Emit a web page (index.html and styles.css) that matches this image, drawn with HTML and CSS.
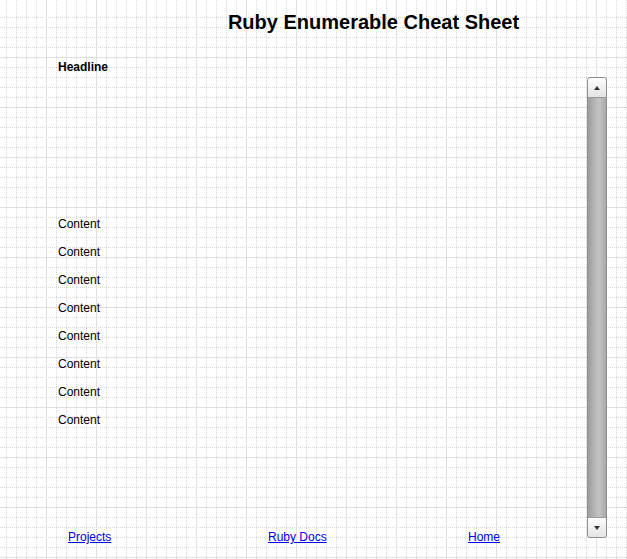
FILE: index.html
```html
<!DOCTYPE html>
<html lang="en">
<head>
<meta charset="utf-8">
<title>Ruby Enumerable Cheat Sheet</title>
<link rel="stylesheet" href="styles.css">
</head>
<body>
<div class="page">
  <h1 class="title">Ruby Enumerable Cheat Sheet</h1>
  <div class="main">
    <div class="column">
      <h2 class="headline">Headline</h2>
      <ul class="content-list">
        <li>Content</li>
        <li>Content</li>
        <li>Content</li>
        <li>Content</li>
        <li>Content</li>
        <li>Content</li>
        <li>Content</li>
        <li>Content</li>
      </ul>
      <nav class="footer-links">
        <a href="#">Projects</a>
        <a href="#">Ruby Docs</a>
        <a href="#">Home</a>
      </nav>
    </div>
    <div class="scrollbar">
      <div class="sb-btn"><span class="arrow-up"></span></div>
      <div class="sb-thumb"></div>
      <div class="sb-btn sb-btn-down"><span class="arrow-down"></span></div>
    </div>
  </div>
</div>
</body>
</html>
```

FILE: styles.css
```css
html, body {
  margin: 0;
  padding: 0;
  background: #ffffff;
}

body {
  font-family: "Liberation Sans", Arial, Helvetica, sans-serif;
  color: #000;
}

.page {
  box-sizing: border-box;
  min-height: 100vh;
  padding-top: 10px;
  background-color: #ffffff;
  background-image:
    url("data:image/svg+xml,%3Csvg xmlns='http://www.w3.org/2000/svg' width='50' height='2'%3E%3Crect x='0' y='0' width='1' height='2' fill='%23e0e0e0'/%3E%3Crect x='10' y='0' width='1' height='1' fill='%23dadada'/%3E%3Crect x='20' y='0' width='1' height='1' fill='%23dadada'/%3E%3Crect x='30' y='0' width='1' height='1' fill='%23dadada'/%3E%3Crect x='40' y='0' width='1' height='1' fill='%23dadada'/%3E%3C/svg%3E"),
    url("data:image/svg+xml,%3Csvg xmlns='http://www.w3.org/2000/svg' width='2' height='50'%3E%3Crect x='0' y='0' width='2' height='1' fill='%23e0e0e0'/%3E%3Crect x='0' y='10' width='1' height='1' fill='%23dadada'/%3E%3Crect x='0' y='20' width='1' height='1' fill='%23dadada'/%3E%3Crect x='0' y='30' width='1' height='1' fill='%23dadada'/%3E%3Crect x='0' y='40' width='1' height='1' fill='%23dadada'/%3E%3C/svg%3E");
  background-repeat: repeat, repeat;
  background-position: 46px 0, 0 7px;
  background-origin: border-box, border-box;
  background-clip: border-box, content-box;
}

.title {
  margin: 0;
  padding-left: 120px;
  font-size: 20px;
  line-height: 24px;
  font-weight: bold;
  text-align: center;
}

.main {
  display: grid;
  grid-template-columns: 1fr 20px;
  align-items: start;
  padding: 26px 20px 0 58px;
}

.column {
  display: flex;
  flex-direction: column;
}

.headline {
  margin: 0 0 136px 0;
  font-size: 12px;
  line-height: 14px;
  font-weight: bold;
}

.content-list {
  list-style: none;
  margin: 0 0 96px 0;
  padding: 0;
  font-size: 12px;
  line-height: 28px;
}

.footer-links {
  display: flex;
  font-size: 12px;
  line-height: 14px;
}

.footer-links a {
  width: 200px;
  box-sizing: border-box;
  padding-left: 10px;
  color: #0000ee;
  text-decoration: underline;
}

.footer-links a:last-child {
  width: auto;
}

.scrollbar {
  margin-top: 17px;
  width: 20px;
  height: 461px;
  box-sizing: border-box;
  border: 1px solid #8e8e8e;
  border-radius: 3px;
  display: flex;
  flex-direction: column;
  overflow: hidden;
  background: #b0b0b0;
}

.sb-btn {
  height: 19px;
  flex: none;
  background: linear-gradient(#fdfdfd, #e4e4e4);
  border-bottom: 1px solid #9a9a9a;
  display: flex;
  align-items: center;
  justify-content: center;
}

.sb-btn-down {
  border-bottom: 0;
  border-top: 1px solid #9a9a9a;
}

.sb-thumb {
  flex: 1;
  background: linear-gradient(90deg, #9d9d9d 0%, #b4b4b4 35%, #c4c4c4 60%, #a9a9a9 100%);
}

.arrow-up {
  width: 0;
  height: 0;
  border-left: 3.5px solid transparent;
  border-right: 3.5px solid transparent;
  border-bottom: 4px solid #333;
}

.arrow-down {
  width: 0;
  height: 0;
  border-left: 3.5px solid transparent;
  border-right: 3.5px solid transparent;
  border-top: 4px solid #333;
}
```
